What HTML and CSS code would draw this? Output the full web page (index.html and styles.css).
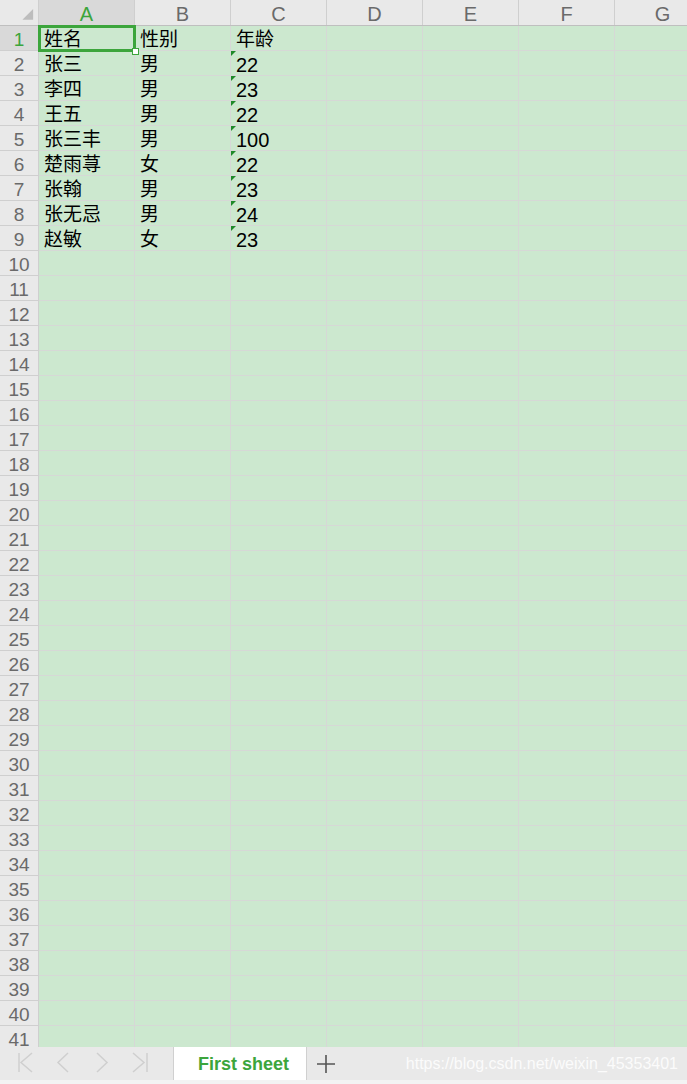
FILE: index.html
```html
<!DOCTYPE html>
<html lang="zh-CN">
<head>
<meta charset="utf-8">
<title>Sheet</title>
<link rel="stylesheet" href="styles.css">
</head>
<body>
<div class="app">
  <div class="sheet">
    <div class="colhead">
      <div class="corner"><svg width="39" height="25" viewBox="0 0 39 25"><polygon points="34,9 34,20 23,20" fill="#bdbdbd"/></svg></div>
      <div class="ch active">A</div><div class="ch">B</div><div class="ch">C</div><div class="ch">D</div><div class="ch">E</div><div class="ch">F</div><div class="ch">G</div>
    </div>
    <div class="body">
      <div class="row"><div class="rh active">1</div><div class="c sel">姓名<span class="selbox"><span class="handle"></span></span></div><div class="c">性别</div><div class="c">年龄</div></div>
      <div class="row"><div class="rh">2</div><div class="c">张三</div><div class="c">男</div><div class="c num"><i class="tri"></i>22</div></div>
      <div class="row"><div class="rh">3</div><div class="c">李四</div><div class="c">男</div><div class="c num"><i class="tri"></i>23</div></div>
      <div class="row"><div class="rh">4</div><div class="c">王五</div><div class="c">男</div><div class="c num"><i class="tri"></i>22</div></div>
      <div class="row"><div class="rh">5</div><div class="c">张三丰</div><div class="c">男</div><div class="c num"><i class="tri"></i>100</div></div>
      <div class="row"><div class="rh">6</div><div class="c">楚雨荨</div><div class="c">女</div><div class="c num"><i class="tri"></i>22</div></div>
      <div class="row"><div class="rh">7</div><div class="c">张翰</div><div class="c">男</div><div class="c num"><i class="tri"></i>23</div></div>
      <div class="row"><div class="rh">8</div><div class="c">张无忌</div><div class="c">男</div><div class="c num"><i class="tri"></i>24</div></div>
      <div class="row"><div class="rh">9</div><div class="c">赵敏</div><div class="c">女</div><div class="c num"><i class="tri"></i>23</div></div>
      <div class="row"><div class="rh">10</div></div>
      <div class="row"><div class="rh">11</div></div>
      <div class="row"><div class="rh">12</div></div>
      <div class="row"><div class="rh">13</div></div>
      <div class="row"><div class="rh">14</div></div>
      <div class="row"><div class="rh">15</div></div>
      <div class="row"><div class="rh">16</div></div>
      <div class="row"><div class="rh">17</div></div>
      <div class="row"><div class="rh">18</div></div>
      <div class="row"><div class="rh">19</div></div>
      <div class="row"><div class="rh">20</div></div>
      <div class="row"><div class="rh">21</div></div>
      <div class="row"><div class="rh">22</div></div>
      <div class="row"><div class="rh">23</div></div>
      <div class="row"><div class="rh">24</div></div>
      <div class="row"><div class="rh">25</div></div>
      <div class="row"><div class="rh">26</div></div>
      <div class="row"><div class="rh">27</div></div>
      <div class="row"><div class="rh">28</div></div>
      <div class="row"><div class="rh">29</div></div>
      <div class="row"><div class="rh">30</div></div>
      <div class="row"><div class="rh">31</div></div>
      <div class="row"><div class="rh">32</div></div>
      <div class="row"><div class="rh">33</div></div>
      <div class="row"><div class="rh">34</div></div>
      <div class="row"><div class="rh">35</div></div>
      <div class="row"><div class="rh">36</div></div>
      <div class="row"><div class="rh">37</div></div>
      <div class="row"><div class="rh">38</div></div>
      <div class="row"><div class="rh">39</div></div>
      <div class="row"><div class="rh">40</div></div>
      <div class="row"><div class="rh">41</div></div>
    </div>
  </div>
  <div class="tabbar">
    <div class="nav">
      <svg width="173" height="33" viewBox="0 0 173 33" fill="none" stroke="#cfcfcf" stroke-width="1.5">
        <path d="M19 6V25M32 6L21 15.5L32 25"/>
        <path d="M68 6L58 15.5L68 25"/>
        <path d="M97 6L107 15.5L97 25"/>
        <path d="M133 6L144 15.5L133 25M147 6V25"/>
      </svg>
    </div>
    <div class="tab">First sheet</div>
    <div class="add"><svg width="20" height="22" viewBox="0 0 20 22" fill="none" stroke="#555" stroke-width="1.6"><path d="M10 2V20M1 11H19"/></svg></div>
    <div class="wm">https://blog.csdn.net/weixin_45353401</div>
  </div>
  <div class="strip"></div>
</div>
</body>
</html>
```
FILE: styles.css
```css
html, body { margin: 0; padding: 0; }
body {
  width: 687px;
  height: 1084px;
  overflow: hidden;
  font-family: "Liberation Sans", "Noto Sans CJK SC", sans-serif;
  background: #e9e9e9;
}
.app { display: flex; flex-direction: column; width: 687px; height: 1084px; }
.sheet { height: 1047px; overflow: hidden; display: flex; flex-direction: column; }
.colhead {
  display: flex;
  flex: none;
  height: 26px;
  box-sizing: border-box;
  border-bottom: 1px solid #bfbfbf;
  background: #e9e9e9;
}
.corner {
  width: 39px;
  flex: none;
  box-sizing: border-box;
  border-right: 1px solid #cfcfcf;
  display: flex;
}
.ch {
  width: 96px;
  flex: none;
  box-sizing: border-box;
  border-right: 1px solid #cfcfcf;
  text-align: center;
  font-size: 20px;
  line-height: 25px;
  padding-top: 2px;
  color: #6a6a6a;
}
.ch.active { background: #d9d9d9; color: #3ca53c; }
.body {
  flex: 1;
  background-color: #cce8cf;
  background-image: repeating-linear-gradient(to right, transparent 0 95px, #d6d8d6 95px 96px);
  background-position: 39px 0;
}
.row {
  display: flex;
  height: 25px;
  box-sizing: border-box;
  border-bottom: 1px solid #d6d8d6;
}
.rh {
  width: 39px;
  flex: none;
  box-sizing: border-box;
  border-right: 1px solid #cfcfcf;
  border-bottom: 1px solid #cfcfcf;
  margin-bottom: -1px;
  background: #e9e9e9;
  text-align: center;
  font-size: 19px;
  line-height: 24px;
  padding-top: 2px;
  color: #6a6a6a;
}
.rh.active { background: #d9d9d9; color: #3ca53c; }
.c {
  position: relative;
  width: 96px;
  flex: none;
  box-sizing: border-box;
  padding-left: 5px;
  padding-top: 2px;
  font-size: 19px;
  line-height: 24px;
  color: #000;
}
.c.num { font-size: 20px; }
.tri {
  position: absolute;
  left: 0;
  top: 0;
  width: 0;
  height: 0;
  border-top: 5px solid #1f8a2a;
  border-right: 5px solid transparent;
}
.selbox {
  position: absolute;
  left: -1px;
  top: -1px;
  width: 98px;
  height: 27px;
  box-sizing: border-box;
  border: 3px solid #3ca53c;
}
.handle {
  position: absolute;
  right: -6px;
  bottom: -6px;
  width: 5px;
  height: 5px;
  background: #fff;
  border: 1px solid #3ca53c;
}
.tabbar {
  height: 33px;
  flex: none;
  display: flex;
  align-items: stretch;
  background: #e9e9e9;
}
.nav { width: 173px; flex: none; display: flex; }
.tab {
  width: 134px;
  flex: none;
  box-sizing: border-box;
  background: #fff;
  border-left: 1px solid #d0d0d0;
  border-right: 1px solid #d0d0d0;
  padding-left: 24px;
  padding-top: 2px;
  font-size: 18px;
  font-weight: bold;
  line-height: 31px;
  color: #3ca53c;
}
.add { margin-left: 9px; display: flex; align-items: center; }
.wm {
  margin-left: auto;
  padding-right: 9px;
  padding-top: 1px;
  font-size: 16px;
  line-height: 32px;
  color: rgba(255, 255, 255, 0.85);
}
.strip { flex: 1; background: #f3f3f3; }
```
